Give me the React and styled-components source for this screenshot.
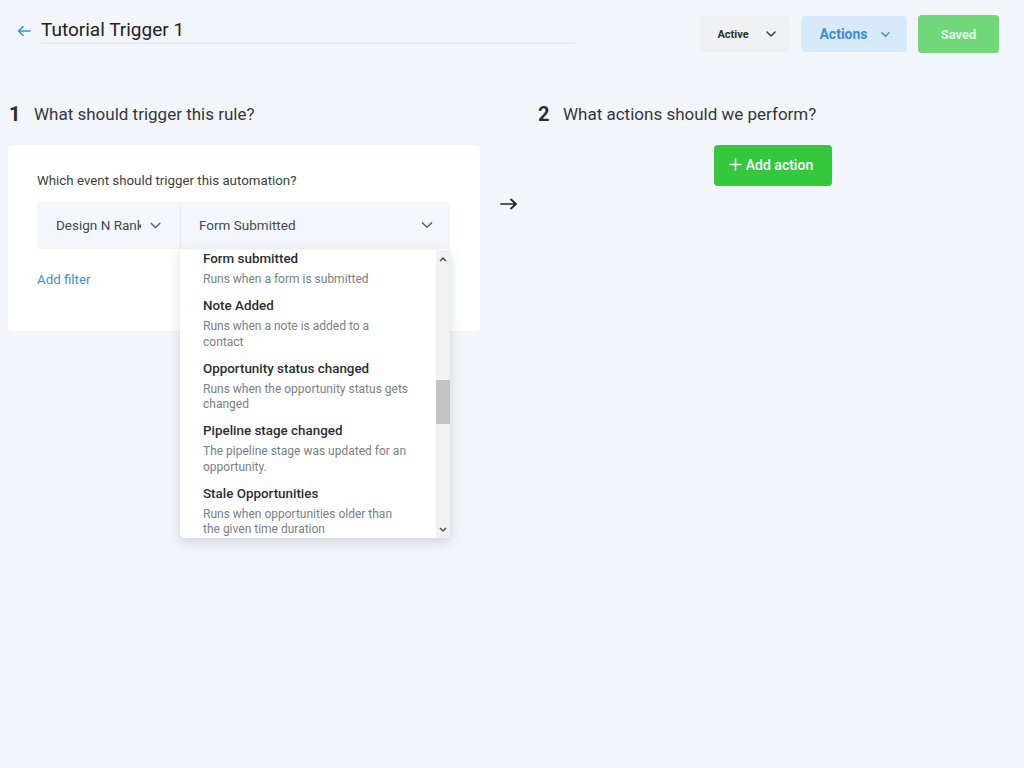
import React from "react";
import styled, { createGlobalStyle } from "styled-components";

const Global = createGlobalStyle`
  html, body { margin: 0; padding: 0; }
  body {
    background: #f2f6fa;
    font-family: Roboto, "Noto Sans", "Liberation Sans", sans-serif;
    color: #2f3337;
  }
  * { box-sizing: border-box; }
`;

const Page = styled.div`
  width: 1024px;
  min-height: 768px;
  background: #f2f6fa;
`;

const Header = styled.header`
  display: flex;
  align-items: center;
  height: 68px;
  padding: 0 25px 0 16px;
`;

const BackButton = styled.button`
  border: 0;
  background: none;
  padding: 0;
  width: 16px;
  height: 16px;
  display: flex;
  align-items: center;
  justify-content: center;
  align-self: flex-start;
  margin: 23px 9px 0 0;
`;

const TitleInput = styled.div`
  align-self: flex-start;
  margin-top: 18px;
  width: 534px;
  font-size: 19px;
  color: #1e2124;
  line-height: 24px;
  border-bottom: 2px solid #e8ebef;
`;

const HeaderActions = styled.div`
  margin-left: auto;
  display: flex;
  align-items: center;
  gap: 11px;
`;

const HeaderButton = styled.button`
  border: 0;
  border-radius: 4px;
  height: ${(p) => (p.$tall ? 38 : 36)}px;
  width: ${(p) => p.$w}px;
  display: flex;
  align-items: center;
  justify-content: center;
  gap: ${(p) => p.$gap || 0}px;
  font-family: inherit;
  font-weight: 700;
  font-size: ${(p) => p.$fs}px;
  background: ${(p) => p.$bg};
  color: ${(p) => p.$fg};
  padding: 0 0 0 ${(p) => p.$pl || 0}px;
`;

const Columns = styled.main`
  display: grid;
  grid-template-columns: 472px 58px 470px;
  padding: 34px 0 0 8px;
`;

const Column = styled.section`
  display: flex;
  flex-direction: column;
`;

const StepHeading = styled.h2`
  margin: 0;
  display: flex;
  align-items: center;
  height: 24px;
  font-weight: 400;
  font-size: 17px;
  color: #34383c;
  gap: 15px;
`;

const StepNumber = styled.span`
  font-size: 20px;
  font-weight: 700;
  color: #2a2d30;
  width: 10px;
  margin-left: ${(p) => p.$ml || 0}px;
`;

const Card = styled.div`
  margin-top: 19px;
  background: #fff;
  border-radius: 4px;
  height: 186px;
  padding: 28px 29px 0 29px;
`;

const FieldLabel = styled.div`
  font-size: 13.3px;
  line-height: 16px;
  color: #3a3e42;
`;

const SelectGroup = styled.div`
  position: relative;
  margin-top: 13px;
  display: flex;
  height: 47px;
  background: #f3f6fa;
  border-radius: 2px;
  width: 413px;
`;

const SelectSeg = styled.div`
  display: flex;
  align-items: center;
  width: ${(p) => p.$w}px;
  flex: ${(p) => (p.$grow ? 1 : "none")};
  padding: ${(p) => p.$pad};
  font-size: 13.5px;
  color: #44494e;
  border-left: ${(p) => (p.$divider ? "1px solid #e8ecf1" : "none")};
  gap: 8px;
  padding-bottom: 1px;
`;

const SegText = styled.span`
  flex: 1;
  white-space: nowrap;
  overflow: hidden;
`;

const Chevron = ({ size = 12, color = "#5b6167", sw = 1.4 }) => (
  <svg width={size} height={size} viewBox="0 0 12 12" fill="none">
    <path d="M2 4l4 4 4-4" stroke={color} strokeWidth={sw} strokeLinecap="round" strokeLinejoin="round" />
  </svg>
);

const Dropdown = styled.div`
  position: absolute;
  top: 48px;
  left: 143px;
  width: 270px;
  height: 288px;
  background: #fff;
  border-radius: 0 0 4px 4px;
  box-shadow: 0 4px 12px rgba(40, 55, 75, 0.18);
  display: flex;
  overflow: hidden;
  z-index: 5;
`;

const OptionList = styled.ul`
  list-style: none;
  margin: 0;
  padding: 1px 26px 0 23px;
  flex: 1;
  overflow: hidden;
`;

const Option = styled.li`
  padding: 0 0 10.5px;
`;

const OptionTitle = styled.div`
  font-size: 13.4px;
  line-height: 16px;
  font-weight: 500;
  color: #2b2f33;
  margin-bottom: 5px;
`;

const OptionDesc = styled.div`
  font-size: 12px;
  line-height: 15.5px;
  color: #7a8086;
`;

const Scrollbar = styled.div`
  width: 14px;
  background: #f1f1f1;
  display: flex;
  flex-direction: column;
  align-items: center;
`;

const ScrollArrow = styled.div`
  height: 17px;
  display: flex;
  align-items: center;
  justify-content: center;
`;

const ScrollTrack = styled.div`
  flex: 1;
  width: 100%;
  display: flex;
  flex-direction: column;
  padding-top: 113px;
`;

const ScrollThumb = styled.div`
  height: 44px;
  width: 100%;
  background: #c3c3c3;
`;

const AddFilter = styled.a`
  display: block;
  margin-top: 23px;
  font-size: 13.3px;
  color: #3d8fd8;
  line-height: 16px;
  text-decoration: none;
`;

const ArrowCell = styled.div`
  display: flex;
  justify-content: center;
  padding-top: 96px;
  color: #222;
`;

const AddActionRow = styled.div`
  margin-top: 19px;
  display: flex;
  justify-content: center;
`;

const AddActionButton = styled.button`
  border: 0;
  border-radius: 4px;
  width: 118px;
  height: 41px;
  background: #35c73c;
  color: #fff;
  font-family: inherit;
  font-size: 14px;
  font-weight: 500;
  display: flex;
  align-items: center;
  justify-content: center;
  gap: 4px;
  padding: 0 4px 2px 0;
`;

const options = [
  { t: "Form submitted", d: "Runs when a form is submitted" },
  { t: "Note Added", d: "Runs when a note is added to a contact" },
  { t: "Opportunity status changed", d: "Runs when the opportunity status gets changed" },
  { t: "Pipeline stage changed", d: "The pipeline stage was updated for an opportunity." },
  { t: "Stale Opportunities", d: "Runs when opportunities older than the given time duration" },
];

export default function App() {
  return (
    <Page>
      <Global />
      <Header>
        <BackButton aria-label="Back">
          <svg width="14" height="12" viewBox="0 0 14 12" fill="none">
            <path d="M13 6H2M6 1.5L1.5 6 6 10.5" stroke="#3f8fdb" strokeWidth="1.6" strokeLinecap="round" strokeLinejoin="round" />
          </svg>
        </BackButton>
        <TitleInput>Tutorial Trigger 1</TitleInput>
        <HeaderActions>
          <HeaderButton $w={90} $bg="#eef0f2" $fg="#2a2d30" $fs={11} $gap={16} $pl={4}>
            Active <Chevron size={12} color="#3a3e42" sw={1.5} />
          </HeaderButton>
          <HeaderButton $w={106} $bg="#d8e9fa" $fg="#3a8de0" $fs={14} $gap={12} $pl={2}>
            Actions <Chevron size={11} color="#3a8de0" sw={1.5} />
          </HeaderButton>
          <HeaderButton $w={81} $tall $bg="#72d67b" $fg="#e3f7e5" $fs={13}>
            Saved
          </HeaderButton>
        </HeaderActions>
      </Header>
      <Columns>
        <Column>
          <StepHeading>
            <StepNumber $ml={1}>1</StepNumber>
            What should trigger this rule?
          </StepHeading>
          <Card>
            <FieldLabel>Which event should trigger this automation?</FieldLabel>
            <SelectGroup>
              <SelectSeg $w={143} $pad="0 18px 0 19px">
                <SegText>Design N Ranking</SegText>
                <Chevron size={13} color="#5b6167" sw={1.3} />
              </SelectSeg>
              <SelectSeg $grow $divider $pad="0 16px 0 18px">
                <SegText>Form Submitted</SegText>
                <Chevron size={14} color="#5b6167" sw={1.2} />
              </SelectSeg>
              <Dropdown>
                <OptionList>
                  {options.map((o) => (
                    <Option key={o.t}>
                      <OptionTitle>{o.t}</OptionTitle>
                      <OptionDesc>{o.d}</OptionDesc>
                    </Option>
                  ))}
                </OptionList>
                <Scrollbar>
                  <ScrollArrow>
                    <svg width="8" height="6" viewBox="0 0 8 6"><path d="M1 5L4 2l3 3" stroke="#505050" strokeWidth="1.5" fill="none" /></svg>
                  </ScrollArrow>
                  <ScrollTrack>
                    <ScrollThumb />
                  </ScrollTrack>
                  <ScrollArrow>
                    <svg width="8" height="6" viewBox="0 0 8 6"><path d="M1 1l3 3 3-3" stroke="#505050" strokeWidth="1.5" fill="none" /></svg>
                  </ScrollArrow>
                </Scrollbar>
              </Dropdown>
            </SelectGroup>
            <AddFilter href="#">Add filter</AddFilter>
          </Card>
        </Column>
        <ArrowCell>
          <svg width="18" height="12" viewBox="0 0 18 12" fill="none">
            <path d="M1 6h15M11 1.5L16 6l-5 4.5" stroke="#222" strokeWidth="1.7" strokeLinecap="round" strokeLinejoin="round" />
          </svg>
        </ArrowCell>
        <Column>
          <StepHeading>
            <StepNumber>2</StepNumber>
            What actions should we perform?
          </StepHeading>
          <AddActionRow>
            <AddActionButton>
              <svg width="13" height="13" viewBox="0 0 13 13" fill="none">
                <path d="M6.5 1v11M1 6.5h11" stroke="#fff" strokeWidth="1.6" strokeLinecap="round" />
              </svg>
              Add action
            </AddActionButton>
          </AddActionRow>
        </Column>
      </Columns>
    </Page>
  );
}
